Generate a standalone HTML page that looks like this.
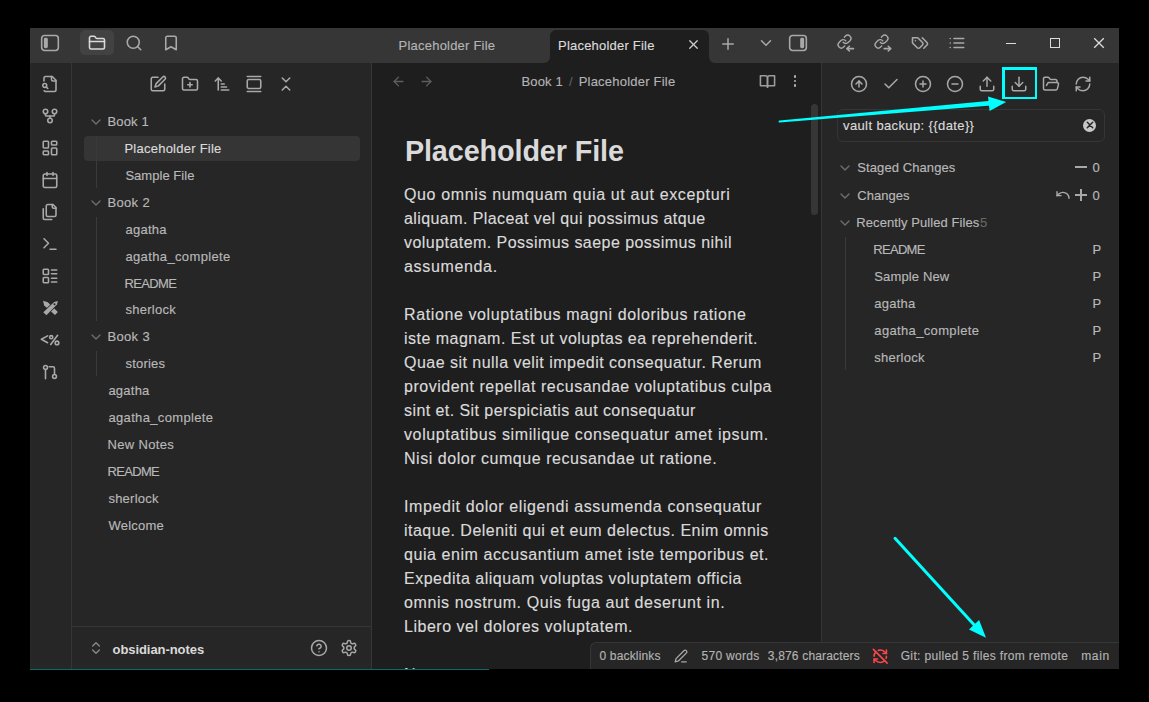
<!DOCTYPE html>
<html><head><meta charset="utf-8">
<style>
*{box-sizing:border-box;margin:0;padding:0}
html,body{width:1149px;height:702px;background:#000;overflow:hidden;font-family:"Liberation Sans",sans-serif;position:relative}
.a{position:absolute}
svg.i{position:absolute;fill:none;stroke-linecap:round;stroke-linejoin:round;overflow:visible}
.t{position:absolute;white-space:pre;line-height:1;font-family:"Liberation Sans",sans-serif}
</style></head><body>
<div class="a" style="left:30px;top:28px;width:1089px;height:641px;background:#262626;"></div>
<div class="a" style="left:30px;top:28px;width:1089px;height:35px;background:#363636;"></div>
<div class="a" style="left:71px;top:63px;width:1px;height:606px;background:#363636;"></div>
<div class="a" style="left:371px;top:63px;width:1px;height:606px;background:#363636;"></div>
<div class="a" style="left:372px;top:63px;width:449px;height:606px;background:#1e1e1e;"></div>
<div class="a" style="left:821px;top:63px;width:1px;height:606px;background:#363636;"></div>
<div class="a" style="left:30px;top:669px;width:459px;height:1px;background:#0d6a6a;"></div>
<div class="a" style="left:30px;top:63px;width:1px;height:606px;background:#2b2b2b;"></div>
<div class="a" style="left:1118px;top:63px;width:1px;height:606px;background:#2b2b2b;"></div>
<svg class="i" style="left:40.00px;top:33.00px;stroke:#a9a9a9;stroke-width:1.9;" width="20" height="20" viewBox="0 0 24 24"><rect x="2" y="3" width="20" height="18" rx="3.5"/><rect x="5.4" y="6.4" width="3.2" height="11.2" rx="1" fill="#a8a8a8" stroke-width="1.5"/></svg>
<div class="a" style="left:80px;top:30px;width:34px;height:25px;background:#424242;border-radius:5px"></div>
<svg class="i" style="left:88.00px;top:33.50px;stroke:#dadada;stroke-width:2.1;" width="18" height="18" viewBox="0 0 24 24"><path d="M20 20a2 2 0 0 0 2-2V8a2 2 0 0 0-2-2h-7.9a2 2 0 0 1-1.69-.9L9.6 3.9A2 2 0 0 0 7.93 3H4a2 2 0 0 0-2 2v13a2 2 0 0 0 2 2Z"/><path d="M2 10h20"/></svg>
<svg class="i" style="left:125.00px;top:33.50px;stroke:#a9a9a9;stroke-width:2.1;" width="18" height="18" viewBox="0 0 24 24"><circle cx="11" cy="11" r="8"/><path d="m21 21-4.3-4.3"/></svg>
<svg class="i" style="left:162.00px;top:33.50px;stroke:#a9a9a9;stroke-width:2.1;" width="18" height="18" viewBox="0 0 24 24"><path d="m19 21-7-4-7 4V5a2 2 0 0 1 2-2h10a2 2 0 0 1 2 2v16z"/></svg>
<div class="t" style="left:398.60px;top:39.20px;font-size:13px;color:#b3b3b3;font-weight:400;letter-spacing:0.214px;-webkit-text-stroke:0.15px currentColor;">Placeholder File</div>
<div class="a" style="left:544px;top:57px;width:6px;height:6px;background:#1e1e1e;"></div>
<div class="a" style="left:544px;top:57px;width:6px;height:6px;background:#363636;border-bottom-right-radius:6px"></div>
<div class="a" style="left:709px;top:57px;width:6px;height:6px;background:#1e1e1e;"></div>
<div class="a" style="left:709px;top:57px;width:6px;height:6px;background:#363636;border-bottom-left-radius:6px"></div>
<div class="a" style="left:550px;top:30px;width:159px;height:33px;background:#1e1e1e;border-radius:6px 6px 0 0"></div>
<div class="t" style="left:558.00px;top:39.00px;font-size:13px;color:#dadada;font-weight:400;letter-spacing:0.214px;-webkit-text-stroke:0.15px currentColor;">Placeholder File</div>
<svg class="i" style="left:685.50px;top:37.30px;stroke:#cfcfcf;stroke-width:2;" width="15" height="15" viewBox="0 0 24 24"><path d="M18 6 6 18"/><path d="m6 6 12 12"/></svg>
<svg class="i" style="left:719.00px;top:35.00px;stroke:#a9a9a9;stroke-width:2;" width="18" height="18" viewBox="0 0 24 24"><path d="M5 12h14"/><path d="M12 5v14"/></svg>
<svg class="i" style="left:757.00px;top:34.00px;stroke:#a9a9a9;stroke-width:2;" width="18" height="18" viewBox="0 0 24 24"><path d="m6 9 6 6 6-6"/></svg>
<svg class="i" style="left:788.00px;top:33.00px;stroke:#a9a9a9;stroke-width:1.9;" width="20" height="20" viewBox="0 0 24 24"><rect x="2" y="3" width="20" height="18" rx="3.5"/><rect x="15.4" y="6.4" width="3.2" height="11.2" rx="1" fill="#a8a8a8" stroke-width="1.5"/></svg>
<svg class="i" style="left:837.00px;top:33.60px;stroke:#a9a9a9;stroke-width:2.1;" width="18" height="18" viewBox="0 0 24 24"><g transform="translate(-0.3,-0.2) scale(0.86)"><path d="M10 13a5 5 0 0 0 7.54.54l3-3a5 5 0 0 0-7.07-7.07l-1.72 1.71"/><path d="M14 11a5 5 0 0 0-7.54-.54l-3 3a5 5 0 0 0 7.07 7.07l1.71-1.71"/></g><path d="M22 19.5h-8.5"/><path d="M16.5 16.3l-3.2 3.2 3.2 3.2"/></svg>
<svg class="i" style="left:874.00px;top:33.60px;stroke:#a9a9a9;stroke-width:2.1;" width="18" height="18" viewBox="0 0 24 24"><g transform="translate(-0.3,-0.2) scale(0.86)"><path d="M10 13a5 5 0 0 0 7.54.54l3-3a5 5 0 0 0-7.07-7.07l-1.72 1.71"/><path d="M14 11a5 5 0 0 0-7.54-.54l-3 3a5 5 0 0 0 7.07 7.07l1.71-1.71"/></g><path d="M13.5 19.5h8.5"/><path d="M19 16.3l3.2 3.2-3.2 3.2"/></svg>
<svg class="i" style="left:911.00px;top:33.60px;stroke:#a9a9a9;stroke-width:2.1;" width="18" height="18" viewBox="0 0 24 24"><path d="M9 5H2v7l6.29 6.29c.94.94 2.48.94 3.42 0l3.58-3.58c.94-.94.94-2.48 0-3.42L9 5Z"/><path d="M6 9.01V9"/><path d="m15 5 6.3 6.3a2.4 2.4 0 0 1 0 3.4L17 19"/></svg>
<svg class="i" style="left:948.00px;top:33.60px;stroke:#a9a9a9;stroke-width:2.1;" width="18" height="18" viewBox="0 0 24 24"><line x1="8" x2="21" y1="6" y2="6"/><line x1="8" x2="21" y1="12" y2="12"/><line x1="8" x2="21" y1="18" y2="18"/><line x1="3" x2="3.01" y1="6" y2="6"/><line x1="3" x2="3.01" y1="12" y2="12"/><line x1="3" x2="3.01" y1="18" y2="18"/></svg>
<div class="a" style="left:1006px;top:42.6px;width:10px;height:1.3px;background:#dcdcdc;"></div>
<div class="a" style="left:1050px;top:38px;width:10px;height:10px;background:transparent;border:1.3px solid #dcdcdc"></div>
<svg class="i" style="left:1092.00px;top:36.00px;stroke:#dcdcdc;stroke-width:1.3;" width="14" height="14" viewBox="0 0 14 14"><path d="M2.2 2.2 L11.8 11.8 M11.8 2.2 L2.2 11.8" stroke-linecap="butt"/></svg>
<svg class="i" style="left:41.00px;top:75.00px;stroke:#a9a9a9;stroke-width:2.1;" width="18" height="18" viewBox="0 0 24 24"><path d="M14 2v4a2 2 0 0 0 2 2h4"/><path d="M4.3 21a2 2 0 0 0 1.7 1H18a2 2 0 0 0 2-2V7l-5-5H6a2 2 0 0 0-2 2v4"/><circle cx="5" cy="14" r="2.6"/><path d="m9 18-1.8-1.8"/></svg>
<svg class="i" style="left:41.00px;top:107.00px;stroke:#a9a9a9;stroke-width:2.1;" width="18" height="18" viewBox="0 0 24 24"><circle cx="12" cy="18" r="3"/><circle cx="6" cy="6" r="3"/><circle cx="18" cy="6" r="3"/><path d="M18 9v2c0 .6-.4 1-1 1H7c-.6 0-1-.4-1-1V9"/><path d="M12 12v3"/></svg>
<svg class="i" style="left:41.00px;top:139.00px;stroke:#a9a9a9;stroke-width:2.1;" width="18" height="18" viewBox="0 0 24 24"><rect width="7" height="9" x="3" y="3" rx="1"/><rect width="7" height="5" x="14" y="3" rx="1"/><rect width="7" height="9" x="14" y="12" rx="1"/><rect width="7" height="5" x="3" y="16" rx="1"/></svg>
<svg class="i" style="left:41.00px;top:171.00px;stroke:#a9a9a9;stroke-width:2.1;" width="18" height="18" viewBox="0 0 24 24"><rect width="18" height="18" x="3" y="4" rx="2"/><path d="M16 2v4"/><path d="M8 2v4"/><path d="M3 10h18"/></svg>
<svg class="i" style="left:41.00px;top:203.00px;stroke:#a9a9a9;stroke-width:2.1;" width="18" height="18" viewBox="0 0 24 24"><path d="M20 7h-3a2 2 0 0 1-2-2V2"/><path d="M9 18a2 2 0 0 1-2-2V4a2 2 0 0 1 2-2h7l4 4v10a2 2 0 0 1-2 2Z"/><path d="M3 7.6v12.8A1.6 1.6 0 0 0 4.6 22h9.8"/></svg>
<svg class="i" style="left:41.00px;top:235.00px;stroke:#a9a9a9;stroke-width:2.1;" width="18" height="18" viewBox="0 0 24 24"><polyline points="4 17 10 11 4 5"/><line x1="12" x2="20" y1="19" y2="19"/></svg>
<svg class="i" style="left:41.00px;top:267.00px;stroke:#a9a9a9;stroke-width:2.1;" width="18" height="18" viewBox="0 0 24 24"><rect width="7" height="7" x="3" y="3" rx="1"/><rect width="7" height="7" x="3" y="14" rx="1"/><path d="M14 4h7"/><path d="M14 9h7"/><path d="M14 15h7"/><path d="M14 20h7"/></svg>
<svg class="i" style="left:38.00px;top:296.00px;stroke:#a9a9a9;stroke-width:1.4;" width="24" height="24" viewBox="0 0 24 24"><g fill="#a8a8a8" stroke="none"><polygon points="5.0,4.8 9.8,6.2 19.9,15.9 17.0,18.9 6.2,9.6"/></g><polygon points="5.3,16.2 16.2,5.9 19.9,4.9 19.0,8.6 8.4,19.3" fill="#a8a8a8" stroke="#262626" stroke-width="1.4" paint-order="stroke" stroke-linejoin="miter"/><circle cx="16.5" cy="8.2" r="1" fill="#262626" stroke="none"/></svg>
<svg class="i" style="left:38.00px;top:328.00px;stroke:#a9a9a9;stroke-width:1.6;" width="24" height="24" viewBox="0 0 24 24"><path d="M9.6 7.9 3.4 11.3 9.6 14.7"/><path d="M19.6 7.3 12.7 16.5"/><circle cx="13.2" cy="9.2" r="1.6"/><circle cx="19" cy="14.9" r="1.8"/></svg>
<svg class="i" style="left:41.00px;top:363.00px;stroke:#a9a9a9;stroke-width:2.1;" width="18" height="18" viewBox="0 0 24 24"><circle cx="6" cy="6" r="2.6"/><path d="M6 8.6V21"/><circle cx="18" cy="18" r="2.6"/><path d="M11 5h5a2 2 0 0 1 2 2v8.4"/></svg>
<svg class="i" style="left:149.00px;top:75.00px;stroke:#a9a9a9;stroke-width:2.1;" width="18" height="18" viewBox="0 0 24 24"><path d="M12 3H5a2 2 0 0 0-2 2v14a2 2 0 0 0 2 2h14a2 2 0 0 0 2-2v-7"/><path d="M18.4 2.6a2.1 2.1 0 0 1 3 3L12.5 14.5 8 16l1.5-4.5z"/></svg>
<svg class="i" style="left:181.00px;top:75.00px;stroke:#a9a9a9;stroke-width:2.1;" width="18" height="18" viewBox="0 0 24 24"><path d="M12 10v6"/><path d="M9 13h6"/><path d="M20 20a2 2 0 0 0 2-2V8a2 2 0 0 0-2-2h-7.9a2 2 0 0 1-1.69-.9L9.6 3.9A2 2 0 0 0 7.93 3H4a2 2 0 0 0-2 2v13a2 2 0 0 0 2 2Z"/></svg>
<svg class="i" style="left:213.00px;top:75.00px;stroke:#a9a9a9;stroke-width:2.1;" width="18" height="18" viewBox="0 0 24 24"><path d="m3 8 4-4 4 4"/><path d="M7 4v16"/><path d="M11 12h4"/><path d="M11 16h7"/><path d="M11 20h10"/></svg>
<svg class="i" style="left:245.00px;top:75.00px;stroke:#a9a9a9;stroke-width:2.1;" width="18" height="18" viewBox="0 0 24 24"><path d="M3 2h18"/><rect width="18" height="12" x="3" y="6" rx="2"/><path d="M3 22h18"/></svg>
<svg class="i" style="left:277.00px;top:75.00px;stroke:#a9a9a9;stroke-width:2.1;" width="18" height="18" viewBox="0 0 24 24"><path d="m7 20 5-5 5 5"/><path d="m7 4 5 5 5-5"/></svg>
<div class="a" style="left:84px;top:136px;width:276px;height:25px;background:#353535;border-radius:4px"></div>
<div class="t" style="left:107.40px;top:115.00px;font-size:13px;color:#b8b8b8;font-weight:400;letter-spacing:0.171px;-webkit-text-stroke:0.15px currentColor;">Book 1</div>
<svg class="i" style="left:88.00px;top:114.00px;stroke:#6e6e6e;stroke-width:2.0;" width="16" height="16" viewBox="0 0 24 24"><path d="m6 9 6 6 6-6"/></svg>
<div class="t" style="left:124.40px;top:141.92px;font-size:13px;color:#dadada;font-weight:400;letter-spacing:0.248px;-webkit-text-stroke:0.15px currentColor;">Placeholder File</div>
<div class="t" style="left:125.40px;top:168.84px;font-size:13px;color:#b8b8b8;font-weight:400;letter-spacing:0.039px;-webkit-text-stroke:0.15px currentColor;">Sample File</div>
<div class="t" style="left:107.40px;top:195.76px;font-size:13px;color:#b8b8b8;font-weight:400;letter-spacing:0.351px;-webkit-text-stroke:0.15px currentColor;">Book 2</div>
<svg class="i" style="left:88.00px;top:194.76px;stroke:#6e6e6e;stroke-width:2.0;" width="16" height="16" viewBox="0 0 24 24"><path d="m6 9 6 6 6-6"/></svg>
<div class="t" style="left:125.40px;top:222.68px;font-size:13px;color:#b8b8b8;font-weight:400;letter-spacing:0.274px;-webkit-text-stroke:0.15px currentColor;">agatha</div>
<div class="t" style="left:125.40px;top:249.60px;font-size:13px;color:#b8b8b8;font-weight:400;letter-spacing:0.371px;-webkit-text-stroke:0.15px currentColor;">agatha_complete</div>
<div class="t" style="left:124.40px;top:276.52px;font-size:13px;color:#b8b8b8;font-weight:400;letter-spacing:-0.629px;-webkit-text-stroke:0.15px currentColor;">README</div>
<div class="t" style="left:125.40px;top:303.44px;font-size:13px;color:#b8b8b8;font-weight:400;letter-spacing:0.285px;-webkit-text-stroke:0.15px currentColor;">sherlock</div>
<div class="t" style="left:107.40px;top:330.36px;font-size:13px;color:#b8b8b8;font-weight:400;letter-spacing:0.351px;-webkit-text-stroke:0.15px currentColor;">Book 3</div>
<svg class="i" style="left:88.00px;top:329.36px;stroke:#6e6e6e;stroke-width:2.0;" width="16" height="16" viewBox="0 0 24 24"><path d="m6 9 6 6 6-6"/></svg>
<div class="t" style="left:125.40px;top:357.28px;font-size:13px;color:#b8b8b8;font-weight:400;letter-spacing:0.235px;-webkit-text-stroke:0.15px currentColor;">stories</div>
<div class="t" style="left:108.40px;top:384.20px;font-size:13px;color:#b8b8b8;font-weight:400;letter-spacing:0.234px;-webkit-text-stroke:0.15px currentColor;">agatha</div>
<div class="t" style="left:108.40px;top:411.12px;font-size:13px;color:#b8b8b8;font-weight:400;letter-spacing:0.349px;-webkit-text-stroke:0.15px currentColor;">agatha_complete</div>
<div class="t" style="left:107.40px;top:438.04px;font-size:13px;color:#b8b8b8;font-weight:400;letter-spacing:0.353px;-webkit-text-stroke:0.15px currentColor;">New Notes</div>
<div class="t" style="left:107.40px;top:464.96px;font-size:13px;color:#b8b8b8;font-weight:400;letter-spacing:-0.649px;-webkit-text-stroke:0.15px currentColor;">README</div>
<div class="t" style="left:108.40px;top:491.88px;font-size:13px;color:#b8b8b8;font-weight:400;letter-spacing:0.242px;-webkit-text-stroke:0.15px currentColor;">sherlock</div>
<div class="t" style="left:108.40px;top:518.80px;font-size:13px;color:#b8b8b8;font-weight:400;letter-spacing:0.248px;-webkit-text-stroke:0.15px currentColor;">Welcome</div>
<div class="a" style="left:96px;top:136px;width:1px;height:52px;background:#3a3a3a;"></div>
<div class="a" style="left:96px;top:217px;width:1px;height:104px;background:#3a3a3a;"></div>
<div class="a" style="left:96px;top:351px;width:1px;height:25px;background:#3a3a3a;"></div>
<div class="a" style="left:72px;top:626px;width:299px;height:1px;background:#363636;"></div>
<svg class="i" style="left:88.00px;top:640.00px;stroke:#8a8a8a;stroke-width:2;" width="16" height="16" viewBox="0 0 24 24"><path d="m7 15 5 5 5-5"/><path d="m7 9 5-5 5 5"/></svg>
<div class="t" style="left:112.50px;top:642.50px;font-size:13px;color:#dadada;font-weight:700;letter-spacing:-0.063px;">obsidian-notes</div>
<svg class="i" style="left:310.00px;top:639.00px;stroke:#a9a9a9;stroke-width:2;" width="18" height="18" viewBox="0 0 24 24"><circle cx="12" cy="12" r="10"/><path d="M9.09 9a3 3 0 0 1 5.83 1c0 2-3 3-3 3"/><path d="M12 17h.01"/></svg>
<svg class="i" style="left:340.00px;top:639.00px;stroke:#a9a9a9;stroke-width:2;" width="18" height="18" viewBox="0 0 24 24"><path d="M12.22 2h-.44a2 2 0 0 0-2 2v.18a2 2 0 0 1-1 1.73l-.43.25a2 2 0 0 1-2 0l-.15-.08a2 2 0 0 0-2.73.73l-.22.38a2 2 0 0 0 .73 2.73l.15.1a2 2 0 0 1 1 1.72v.51a2 2 0 0 1-1 1.74l-.15.09a2 2 0 0 0-.73 2.73l.22.38a2 2 0 0 0 2.73.73l.15-.08a2 2 0 0 1 2 0l.43.25a2 2 0 0 1 1 1.73V20a2 2 0 0 0 2 2h.44a2 2 0 0 0 2-2v-.18a2 2 0 0 1 1-1.73l.43-.25a2 2 0 0 1 2 0l.15.08a2 2 0 0 0 2.73-.73l.22-.39a2 2 0 0 0-.73-2.73l-.15-.08a2 2 0 0 1-1-1.74v-.5a2 2 0 0 1 1-1.74l.15-.09a2 2 0 0 0 .73-2.73l-.22-.38a2 2 0 0 0-2.73-.73l-.15.08a2 2 0 0 1-2 0l-.43-.25a2 2 0 0 1-1-1.73V4a2 2 0 0 0-2-2z"/><circle cx="12" cy="12" r="3"/></svg>
<svg class="i" style="left:390.50px;top:73.50px;stroke:#5e5e5e;stroke-width:2.2;" width="15" height="15" viewBox="0 0 24 24"><path d="m12 19-7-7 7-7"/><path d="M19 12H5"/></svg>
<svg class="i" style="left:418.50px;top:73.50px;stroke:#5e5e5e;stroke-width:2.2;" width="15" height="15" viewBox="0 0 24 24"><path d="M5 12h14"/><path d="m12 5 7 7-7 7"/></svg>
<div class="t" style="left:521.50px;top:75.00px;font-size:13px;color:#b3b3b3;font-weight:400;letter-spacing:0.151px;-webkit-text-stroke:0.15px currentColor;">Book 1</div>
<div class="t" style="left:569.00px;top:75.00px;font-size:13px;color:#5e5e5e;font-weight:400;letter-spacing:0.000px;-webkit-text-stroke:0.15px currentColor;">/</div>
<div class="t" style="left:578.70px;top:75.00px;font-size:13px;color:#b3b3b3;font-weight:400;letter-spacing:0.214px;-webkit-text-stroke:0.15px currentColor;">Placeholder File</div>
<svg class="i" style="left:758.50px;top:72.50px;stroke:#9c9c9c;stroke-width:2.2;" width="17" height="17" viewBox="0 0 24 24"><path d="M2 4h7a3 3 0 0 1 3 3v13a2 2 0 0 0-2-2H2z"/><path d="M22 4h-7a3 3 0 0 0-3 3v13a2 2 0 0 1 2-2h8z"/></svg>
<div class="a" style="left:793.6px;top:74.8px;width:2.8px;height:2.8px;background:#b3b3b3;border-radius:50%"></div>
<div class="a" style="left:793.6px;top:79.6px;width:2.8px;height:2.8px;background:#b3b3b3;border-radius:50%"></div>
<div class="a" style="left:793.6px;top:84.4px;width:2.8px;height:2.8px;background:#b3b3b3;border-radius:50%"></div>
<div class="a" style="left:811px;top:104px;width:7px;height:111px;background:#363636;border-radius:4px"></div>
<div class="t" style="left:404.90px;top:136.62px;font-size:28.8px;color:#dadada;font-weight:700;letter-spacing:-0.116px;">Placeholder File</div>
<div class="t" style="left:404.00px;top:187.16px;font-size:16px;color:#dadada;font-weight:400;letter-spacing:0.637px;-webkit-text-stroke:0.15px currentColor;">Quo omnis numquam quia ut aut excepturi</div>
<div class="t" style="left:404.00px;top:211.16px;font-size:16px;color:#dadada;font-weight:400;letter-spacing:0.413px;-webkit-text-stroke:0.15px currentColor;">aliquam. Placeat vel qui possimus atque</div>
<div class="t" style="left:404.00px;top:235.16px;font-size:16px;color:#dadada;font-weight:400;letter-spacing:0.450px;-webkit-text-stroke:0.15px currentColor;">voluptatem. Possimus saepe possimus nihil</div>
<div class="t" style="left:404.00px;top:259.16px;font-size:16px;color:#dadada;font-weight:400;letter-spacing:0.661px;-webkit-text-stroke:0.15px currentColor;">assumenda.</div>
<div class="t" style="left:404.00px;top:307.16px;font-size:16px;color:#dadada;font-weight:400;letter-spacing:0.606px;-webkit-text-stroke:0.15px currentColor;">Ratione voluptatibus magni doloribus ratione</div>
<div class="t" style="left:404.00px;top:331.16px;font-size:16px;color:#dadada;font-weight:400;letter-spacing:0.481px;-webkit-text-stroke:0.15px currentColor;">iste magnam. Est ut voluptas ea reprehenderit.</div>
<div class="t" style="left:404.00px;top:355.16px;font-size:16px;color:#dadada;font-weight:400;letter-spacing:0.478px;-webkit-text-stroke:0.15px currentColor;">Quae sit nulla velit impedit consequatur. Rerum</div>
<div class="t" style="left:404.00px;top:379.16px;font-size:16px;color:#dadada;font-weight:400;letter-spacing:0.514px;-webkit-text-stroke:0.15px currentColor;">provident repellat recusandae voluptatibus culpa</div>
<div class="t" style="left:404.00px;top:403.16px;font-size:16px;color:#dadada;font-weight:400;letter-spacing:0.435px;-webkit-text-stroke:0.15px currentColor;">sint et. Sit perspiciatis aut consequatur</div>
<div class="t" style="left:404.00px;top:427.16px;font-size:16px;color:#dadada;font-weight:400;letter-spacing:0.621px;-webkit-text-stroke:0.15px currentColor;">voluptatibus similique consequatur amet ipsum.</div>
<div class="t" style="left:404.00px;top:451.16px;font-size:16px;color:#dadada;font-weight:400;letter-spacing:0.535px;-webkit-text-stroke:0.15px currentColor;">Nisi dolor cumque recusandae ut ratione.</div>
<div class="t" style="left:404.00px;top:499.16px;font-size:16px;color:#dadada;font-weight:400;letter-spacing:0.597px;-webkit-text-stroke:0.15px currentColor;">Impedit dolor eligendi assumenda consequatur</div>
<div class="t" style="left:404.00px;top:523.16px;font-size:16px;color:#dadada;font-weight:400;letter-spacing:0.486px;-webkit-text-stroke:0.15px currentColor;">itaque. Deleniti qui et eum delectus. Enim omnis</div>
<div class="t" style="left:404.00px;top:547.16px;font-size:16px;color:#dadada;font-weight:400;letter-spacing:0.572px;-webkit-text-stroke:0.15px currentColor;">quia enim accusantium amet iste temporibus et.</div>
<div class="t" style="left:404.00px;top:571.16px;font-size:16px;color:#dadada;font-weight:400;letter-spacing:0.513px;-webkit-text-stroke:0.15px currentColor;">Expedita aliquam voluptas voluptatem officia</div>
<div class="t" style="left:404.00px;top:595.16px;font-size:16px;color:#dadada;font-weight:400;letter-spacing:0.590px;-webkit-text-stroke:0.15px currentColor;">omnis nostrum. Quis fuga aut deserunt in.</div>
<div class="t" style="left:404.00px;top:619.16px;font-size:16px;color:#dadada;font-weight:400;letter-spacing:0.516px;-webkit-text-stroke:0.15px currentColor;">Libero vel dolores voluptatem.</div>
<div class="t" style="left:404.00px;top:667.16px;font-size:16px;color:#dadada;font-weight:400;letter-spacing:0.550px;-webkit-text-stroke:0.15px currentColor;">Nemo numquam numquam</div>
<svg class="i" style="left:850.00px;top:75.00px;stroke:#a9a9a9;stroke-width:2;" width="18" height="18" viewBox="0 0 24 24"><circle cx="12" cy="12" r="10"/><path d="m16 12-4-4-4 4"/><path d="M12 16V8"/></svg>
<svg class="i" style="left:882.00px;top:75.00px;stroke:#a9a9a9;stroke-width:2;" width="18" height="18" viewBox="0 0 24 24"><path d="M20 6 9 17l-5-5"/></svg>
<svg class="i" style="left:914.00px;top:75.00px;stroke:#a9a9a9;stroke-width:2;" width="18" height="18" viewBox="0 0 24 24"><circle cx="12" cy="12" r="10"/><path d="M8 12h8"/><path d="M12 8v8"/></svg>
<svg class="i" style="left:946.00px;top:75.00px;stroke:#a9a9a9;stroke-width:2;" width="18" height="18" viewBox="0 0 24 24"><circle cx="12" cy="12" r="10"/><path d="M8 12h8"/></svg>
<svg class="i" style="left:978.00px;top:75.00px;stroke:#a9a9a9;stroke-width:2;" width="18" height="18" viewBox="0 0 24 24"><path d="M21 15v4a2 2 0 0 1-2 2H5a2 2 0 0 1-2-2v-4"/><polyline points="17 8 12 3 7 8"/><line x1="12" x2="12" y1="3" y2="15"/></svg>
<svg class="i" style="left:1010.00px;top:75.00px;stroke:#a9a9a9;stroke-width:2;" width="18" height="18" viewBox="0 0 24 24"><path d="M21 15v4a2 2 0 0 1-2 2H5a2 2 0 0 1-2-2v-4"/><polyline points="7 10 12 15 17 10"/><line x1="12" x2="12" y1="15" y2="3"/></svg>
<svg class="i" style="left:1042.00px;top:75.00px;stroke:#a9a9a9;stroke-width:2;" width="18" height="18" viewBox="0 0 24 24"><path d="m6 14 1.5-2.9A2 2 0 0 1 9.24 10H20a2 2 0 0 1 1.94 2.5l-1.54 6a2 2 0 0 1-1.95 1.5H4a2 2 0 0 1-2-2V5a2 2 0 0 1 2-2h3.9a2 2 0 0 1 1.69.9l.81 1.2a2 2 0 0 0 1.67.9H18a2 2 0 0 1 2 2v2"/></svg>
<svg class="i" style="left:1074.00px;top:75.00px;stroke:#a9a9a9;stroke-width:2;" width="18" height="18" viewBox="0 0 24 24"><path d="M3 12a9 9 0 0 1 9-9 9.75 9.75 0 0 1 6.74 2.74L21 8"/><path d="M21 3v5h-5"/><path d="M21 12a9 9 0 0 1-9 9 9.75 9.75 0 0 1-6.74-2.74L3 16"/><path d="M8 16H3v5"/></svg>
<div class="a" style="left:837px;top:109px;width:268px;height:33px;background:#262626;border:1px solid #363636;border-radius:6px"></div>
<div class="t" style="left:843.00px;top:118.60px;font-size:13px;color:#dadada;font-weight:400;letter-spacing:0.384px;-webkit-text-stroke:0.15px currentColor;">vault backup: {{date}}</div>
<div class="a" style="left:1082.8px;top:118.7px;width:13.4px;height:13.4px;background:#c8c8c8;border-radius:50%"></div>
<svg class="i" style="left:1082.50px;top:118.40px;stroke:#262626;stroke-width:1.5;" width="14" height="14" viewBox="0 0 14 14"><path d="M4.3 4.3 9.7 9.7M9.7 4.3 4.3 9.7"/></svg>
<svg class="i" style="left:837.00px;top:159.50px;stroke:#6e6e6e;stroke-width:2.0;" width="16" height="16" viewBox="0 0 24 24"><path d="m6 9 6 6 6-6"/></svg>
<div class="t" style="left:857.30px;top:160.70px;font-size:13px;color:#b8b8b8;font-weight:400;letter-spacing:0.088px;-webkit-text-stroke:0.15px currentColor;">Staged Changes</div>
<svg class="i" style="left:837.00px;top:187.50px;stroke:#6e6e6e;stroke-width:2.0;" width="16" height="16" viewBox="0 0 24 24"><path d="m6 9 6 6 6-6"/></svg>
<div class="t" style="left:857.30px;top:188.70px;font-size:13px;color:#b8b8b8;font-weight:400;letter-spacing:0.044px;-webkit-text-stroke:0.15px currentColor;">Changes</div>
<svg class="i" style="left:837.00px;top:214.80px;stroke:#6e6e6e;stroke-width:2.0;" width="16" height="16" viewBox="0 0 24 24"><path d="m6 9 6 6 6-6"/></svg>
<div class="t" style="left:856.30px;top:216.00px;font-size:13px;color:#b8b8b8;font-weight:400;letter-spacing:0.081px;-webkit-text-stroke:0.15px currentColor;">Recently Pulled Files</div>
<div class="t" style="left:980.00px;top:216.00px;font-size:13px;color:#666;font-weight:400;letter-spacing:0.000px;-webkit-text-stroke:0.15px currentColor;">5</div>
<div class="a" style="left:1075px;top:166.3px;width:12px;height:1.4px;background:#a8a8a8;"></div>
<div class="t" style="left:1092.50px;top:161.00px;font-size:13px;color:#b8b8b8;font-weight:400;letter-spacing:0.000px;-webkit-text-stroke:0.15px currentColor;">0</div>
<svg class="i" style="left:1054.50px;top:187.00px;stroke:#a9a9a9;stroke-width:2.1;" width="16" height="16" viewBox="0 0 24 24"><path d="M3 7v6h6"/><path d="M21 17a9 9 0 0 0-9-9 9 9 0 0 0-6 2.3L3 13"/></svg>
<div class="a" style="left:1075px;top:194.4px;width:12px;height:1.4px;background:#a8a8a8;"></div>
<div class="a" style="left:1080.3px;top:189.2px;width:1.4px;height:12px;background:#a8a8a8;"></div>
<div class="t" style="left:1092.50px;top:189.00px;font-size:13px;color:#b8b8b8;font-weight:400;letter-spacing:0.000px;-webkit-text-stroke:0.15px currentColor;">0</div>
<div class="a" style="left:845px;top:237px;width:1px;height:133px;background:#3a3a3a;"></div>
<div class="t" style="left:873.30px;top:243.00px;font-size:13px;color:#b8b8b8;font-weight:400;letter-spacing:-0.709px;-webkit-text-stroke:0.15px currentColor;">README</div>
<div class="t" style="left:1092.50px;top:243.00px;font-size:13px;color:#b8b8b8;font-weight:400;letter-spacing:0.000px;-webkit-text-stroke:0.15px currentColor;">P</div>
<div class="t" style="left:874.30px;top:269.95px;font-size:13px;color:#b8b8b8;font-weight:400;letter-spacing:0.132px;-webkit-text-stroke:0.15px currentColor;">Sample New</div>
<div class="t" style="left:1092.50px;top:269.95px;font-size:13px;color:#b8b8b8;font-weight:400;letter-spacing:0.000px;-webkit-text-stroke:0.15px currentColor;">P</div>
<div class="t" style="left:874.30px;top:296.90px;font-size:13px;color:#b8b8b8;font-weight:400;letter-spacing:0.254px;-webkit-text-stroke:0.15px currentColor;">agatha</div>
<div class="t" style="left:1092.50px;top:296.90px;font-size:13px;color:#b8b8b8;font-weight:400;letter-spacing:0.000px;-webkit-text-stroke:0.15px currentColor;">P</div>
<div class="t" style="left:874.30px;top:323.85px;font-size:13px;color:#b8b8b8;font-weight:400;letter-spacing:0.349px;-webkit-text-stroke:0.15px currentColor;">agatha_complete</div>
<div class="t" style="left:1092.50px;top:323.85px;font-size:13px;color:#b8b8b8;font-weight:400;letter-spacing:0.000px;-webkit-text-stroke:0.15px currentColor;">P</div>
<div class="t" style="left:874.30px;top:350.80px;font-size:13px;color:#b8b8b8;font-weight:400;letter-spacing:0.256px;-webkit-text-stroke:0.15px currentColor;">sherlock</div>
<div class="t" style="left:1092.50px;top:350.80px;font-size:13px;color:#b8b8b8;font-weight:400;letter-spacing:0.000px;-webkit-text-stroke:0.15px currentColor;">P</div>
<div class="a" style="left:0px;top:669px;width:1149px;height:33px;background:#000;"></div>
<div class="a" style="left:30px;top:669px;width:459px;height:1px;background:#0d6a6a;"></div>
<div class="a" style="left:590px;top:642px;width:529px;height:27px;background:#262626;border-left:1px solid #363636;border-top:1px solid #363636;border-radius:6px 0 0 0"></div>
<div class="a" style="left:0px;top:669px;width:1149px;height:33px;background:#000;"></div>
<div class="a" style="left:30px;top:669px;width:459px;height:1px;background:#0d6a6a;"></div>
<div class="t" style="left:599.50px;top:649.84px;font-size:12px;color:#b3b3b3;font-weight:400;letter-spacing:0.164px;-webkit-text-stroke:0.15px currentColor;">0 backlinks</div>
<svg class="i" style="left:674.00px;top:649.00px;stroke:#a9a9a9;stroke-width:2.2;" width="14" height="14" viewBox="0 0 24 24"><path d="M17 3a2.85 2.83 0 1 1 4 4L7.5 20.5 2 22l1.5-5.5Z"/><path d="M13 22h8"/></svg>
<div class="t" style="left:701.50px;top:649.84px;font-size:12px;color:#b3b3b3;font-weight:400;letter-spacing:0.304px;-webkit-text-stroke:0.15px currentColor;">570 words</div>
<div class="t" style="left:767.80px;top:649.84px;font-size:12px;color:#b3b3b3;font-weight:400;letter-spacing:0.174px;-webkit-text-stroke:0.15px currentColor;">3,876 characters</div>
<svg class="i" style="left:871.55px;top:647.55px;stroke:#fb464c;stroke-width:2.35;" width="16.5" height="16.5" viewBox="0 0 24 24"><path d="M21 8L18.74 5.74A9.75 9.75 0 0 0 12 3C11 3 10.03 3.16 9.13 3.47"/><path d="M8 16H3v5"/><path d="M3 12C3 9.51 4 7.26 5.64 5.64"/><path d="m3 16 2.26 2.26A9.75 9.75 0 0 0 12 21c2.49 0 4.74-1 6.36-2.64"/><path d="M21 12c0 1-.16 1.97-.47 2.87"/><path d="M21 3v5h-5"/><path d="M22 22 2 2"/></svg>
<div class="t" style="left:900.70px;top:649.84px;font-size:12px;color:#b3b3b3;font-weight:400;letter-spacing:0.352px;-webkit-text-stroke:0.15px currentColor;">Git: pulled 5 files from remote</div>
<div class="t" style="left:1081.20px;top:649.84px;font-size:12px;color:#b3b3b3;font-weight:400;letter-spacing:0.655px;-webkit-text-stroke:0.15px currentColor;">main</div>
<svg class="a" style="left:0;top:0" width="1149" height="702" viewBox="0 0 1149 702"><path d="M779.5,120.5 L991,100.8 L991,105.6 L779.5,122.5 A1,1 0 0 1 779.5,120.5 Z" fill="#00ffff"/><polygon points="1006.2,102.1 988,96.4 989.6,110.9" fill="#00ffff"/><path d="M1002,67H1037V99H1002Z M1005,70V97H1035V70Z" fill="#00ffff" fill-rule="evenodd"/><line x1="895" y1="538.3" x2="977" y2="628" stroke="#00ffff" stroke-width="3" stroke-linecap="round"/><polygon points="986,637.8 969,629.6 979.1,619.9" fill="#00ffff"/></svg>
</body></html>
